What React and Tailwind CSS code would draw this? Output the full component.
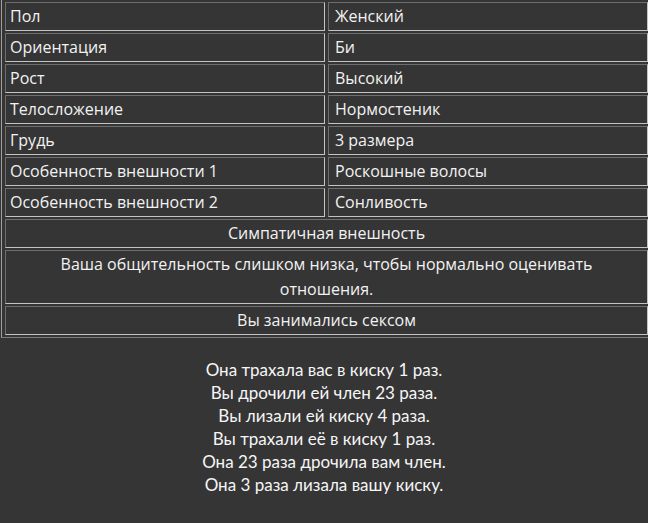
import React from "react";

const rows = [
  ["Пол", "Женский"],
  ["Ориентация", "Би"],
  ["Рост", "Высокий"],
  ["Телосложение", "Нормостеник"],
  ["Грудь", "3 размера"],
  ["Особенность внешности 1", "Роскошные волосы"],
  ["Особенность внешности 2", "Сонливость"],
];

const notes = [
  "Симпатичная внешность",
  "Ваша общительность слишком низка, чтобы нормально оценивать отношения.",
  "Вы занимались сексом",
];

const history = [
  "Она трахала вас в киску 1 раз.",
  "Вы дрочили ей член 23 раза.",
  "Вы лизали ей киску 4 раза.",
  "Вы трахали её в киску 1 раз.",
  "Она 23 раза дрочила вам член.",
  "Она 3 раза лизала вашу киску.",
];

const cell =
  "border border-t-[#6e6e6e] border-l-[#6e6e6e] border-b-[#c4c4c4] border-r-[#c4c4c4] p-px leading-[25px]";

export default function App() {
  return (
    <div className="w-[648px] min-h-[523px] overflow-hidden bg-[#353535] text-[#f2f2f2]">
      <div className="pl-px">
        <table
          className="table-fixed w-[650px] border-separate border-spacing-x-[3px] border-spacing-y-[2px] border-l border-b border-l-[#a0a0a0] border-b-[#7c7c7c] text-[16px]"
          style={{ fontFamily: '"Open Sans", "Noto Sans", sans-serif' }}
        >
          <tbody>
            {rows.map(([label, value]) => (
              <tr key={label}>
                <td className={`${cell} pl-[4px] text-left`}>{label}</td>
                <td className={`${cell} pl-[6px] text-left`}>{value}</td>
              </tr>
            ))}
            {notes.map((note) => (
              <tr key={note}>
                <td colSpan={2} className={`${cell} px-[40px] text-center`}>
                  {note}
                </td>
              </tr>
            ))}
          </tbody>
        </table>
      </div>

      <div
        className="mt-[20px] text-center text-[17px] leading-[23px] text-[#f6f6f6]"
        style={{ fontFamily: 'Lato, "Open Sans", sans-serif' }}
      >
        {history.map((line) => (
          <p key={line}>{line}</p>
        ))}
      </div>
    </div>
  );
}
